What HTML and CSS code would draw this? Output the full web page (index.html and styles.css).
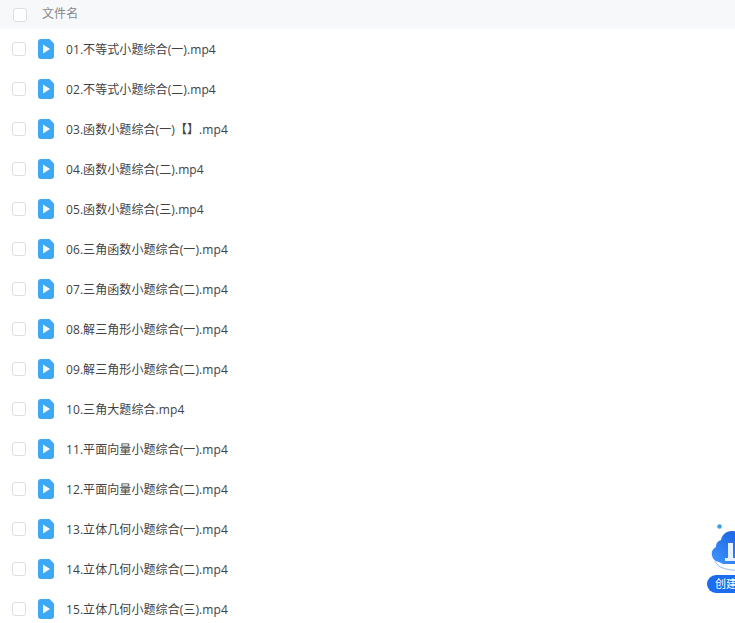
FILE: index.html
```html
<!DOCTYPE html>
<html lang="zh">
<head>
    <meta charset="utf-8" />
    <title>文件列表</title>
    <link rel="stylesheet" href="styles.css">
</head>
<body>
    <div class="head">
        <span class="check check-head"></span>
        <span class="head-name">文件名</span>
    </div>
    <div class="list">
        <div class="row"><span class="check"></span><svg class="ficon" viewBox="0 0 16 20"><path d="M3 0H11.5L16 4.5V17a3 3 0 0 1-3 3H3a3 3 0 0 1-3-3V3a3 3 0 0 1 3-3Z" fill="#3da8f5"/><path d="M5 5.5L12 10L5 14.5Z" fill="#fff"/></svg><span class="name">01.不等式小题综合(一).mp4</span></div>
        <div class="row"><span class="check"></span><svg class="ficon" viewBox="0 0 16 20"><path d="M3 0H11.5L16 4.5V17a3 3 0 0 1-3 3H3a3 3 0 0 1-3-3V3a3 3 0 0 1 3-3Z" fill="#3da8f5"/><path d="M5 5.5L12 10L5 14.5Z" fill="#fff"/></svg><span class="name">02.不等式小题综合(二).mp4</span></div>
        <div class="row"><span class="check"></span><svg class="ficon" viewBox="0 0 16 20"><path d="M3 0H11.5L16 4.5V17a3 3 0 0 1-3 3H3a3 3 0 0 1-3-3V3a3 3 0 0 1 3-3Z" fill="#3da8f5"/><path d="M5 5.5L12 10L5 14.5Z" fill="#fff"/></svg><span class="name">03.函数小题综合(一)【】.mp4</span></div>
        <div class="row"><span class="check"></span><svg class="ficon" viewBox="0 0 16 20"><path d="M3 0H11.5L16 4.5V17a3 3 0 0 1-3 3H3a3 3 0 0 1-3-3V3a3 3 0 0 1 3-3Z" fill="#3da8f5"/><path d="M5 5.5L12 10L5 14.5Z" fill="#fff"/></svg><span class="name">04.函数小题综合(二).mp4</span></div>
        <div class="row"><span class="check"></span><svg class="ficon" viewBox="0 0 16 20"><path d="M3 0H11.5L16 4.5V17a3 3 0 0 1-3 3H3a3 3 0 0 1-3-3V3a3 3 0 0 1 3-3Z" fill="#3da8f5"/><path d="M5 5.5L12 10L5 14.5Z" fill="#fff"/></svg><span class="name">05.函数小题综合(三).mp4</span></div>
        <div class="row"><span class="check"></span><svg class="ficon" viewBox="0 0 16 20"><path d="M3 0H11.5L16 4.5V17a3 3 0 0 1-3 3H3a3 3 0 0 1-3-3V3a3 3 0 0 1 3-3Z" fill="#3da8f5"/><path d="M5 5.5L12 10L5 14.5Z" fill="#fff"/></svg><span class="name">06.三角函数小题综合(一).mp4</span></div>
        <div class="row"><span class="check"></span><svg class="ficon" viewBox="0 0 16 20"><path d="M3 0H11.5L16 4.5V17a3 3 0 0 1-3 3H3a3 3 0 0 1-3-3V3a3 3 0 0 1 3-3Z" fill="#3da8f5"/><path d="M5 5.5L12 10L5 14.5Z" fill="#fff"/></svg><span class="name">07.三角函数小题综合(二).mp4</span></div>
        <div class="row"><span class="check"></span><svg class="ficon" viewBox="0 0 16 20"><path d="M3 0H11.5L16 4.5V17a3 3 0 0 1-3 3H3a3 3 0 0 1-3-3V3a3 3 0 0 1 3-3Z" fill="#3da8f5"/><path d="M5 5.5L12 10L5 14.5Z" fill="#fff"/></svg><span class="name">08.解三角形小题综合(一).mp4</span></div>
        <div class="row"><span class="check"></span><svg class="ficon" viewBox="0 0 16 20"><path d="M3 0H11.5L16 4.5V17a3 3 0 0 1-3 3H3a3 3 0 0 1-3-3V3a3 3 0 0 1 3-3Z" fill="#3da8f5"/><path d="M5 5.5L12 10L5 14.5Z" fill="#fff"/></svg><span class="name">09.解三角形小题综合(二).mp4</span></div>
        <div class="row"><span class="check"></span><svg class="ficon" viewBox="0 0 16 20"><path d="M3 0H11.5L16 4.5V17a3 3 0 0 1-3 3H3a3 3 0 0 1-3-3V3a3 3 0 0 1 3-3Z" fill="#3da8f5"/><path d="M5 5.5L12 10L5 14.5Z" fill="#fff"/></svg><span class="name">10.三角大题综合.mp4</span></div>
        <div class="row"><span class="check"></span><svg class="ficon" viewBox="0 0 16 20"><path d="M3 0H11.5L16 4.5V17a3 3 0 0 1-3 3H3a3 3 0 0 1-3-3V3a3 3 0 0 1 3-3Z" fill="#3da8f5"/><path d="M5 5.5L12 10L5 14.5Z" fill="#fff"/></svg><span class="name">11.平面向量小题综合(一).mp4</span></div>
        <div class="row"><span class="check"></span><svg class="ficon" viewBox="0 0 16 20"><path d="M3 0H11.5L16 4.5V17a3 3 0 0 1-3 3H3a3 3 0 0 1-3-3V3a3 3 0 0 1 3-3Z" fill="#3da8f5"/><path d="M5 5.5L12 10L5 14.5Z" fill="#fff"/></svg><span class="name">12.平面向量小题综合(二).mp4</span></div>
        <div class="row"><span class="check"></span><svg class="ficon" viewBox="0 0 16 20"><path d="M3 0H11.5L16 4.5V17a3 3 0 0 1-3 3H3a3 3 0 0 1-3-3V3a3 3 0 0 1 3-3Z" fill="#3da8f5"/><path d="M5 5.5L12 10L5 14.5Z" fill="#fff"/></svg><span class="name">13.立体几何小题综合(一).mp4</span></div>
        <div class="row"><span class="check"></span><svg class="ficon" viewBox="0 0 16 20"><path d="M3 0H11.5L16 4.5V17a3 3 0 0 1-3 3H3a3 3 0 0 1-3-3V3a3 3 0 0 1 3-3Z" fill="#3da8f5"/><path d="M5 5.5L12 10L5 14.5Z" fill="#fff"/></svg><span class="name">14.立体几何小题综合(二).mp4</span></div>
        <div class="row"><span class="check"></span><svg class="ficon" viewBox="0 0 16 20"><path d="M3 0H11.5L16 4.5V17a3 3 0 0 1-3 3H3a3 3 0 0 1-3-3V3a3 3 0 0 1 3-3Z" fill="#3da8f5"/><path d="M5 5.5L12 10L5 14.5Z" fill="#fff"/></svg><span class="name">15.立体几何小题综合(三).mp4</span></div>
    </div>
    <div class="create">
        <svg class="create-art" viewBox="0 0 40 60">
            <defs>
                <linearGradient id="cloudFill" x1="0" y1="1" x2="1" y2="0">
                    <stop offset="0" stop-color="#3f97fb"/>
                    <stop offset="1" stop-color="#1458e0"/>
                </linearGradient>
            </defs>
            <circle cx="12.5" cy="4.5" r="2.3" fill="#3f9ee8"/>
            <path d="M12 40a8 8 0 0 1-3-15a7 7 0 0 1 5-7a11 11 0 0 1 20-4H42V42H16Z" fill="url(#cloudFill)"/>
            <path d="M8 39q2 7 16 9q8 1 18-1" fill="none" stroke="#8fbdf6" stroke-width="1"/>
            <rect x="21" y="21" width="5" height="15" fill="#e6f1ff"/>
            <rect x="18" y="36" width="16" height="3" fill="#e6f1ff"/>
        </svg>
        <span class="create-btn">创建</span>
    </div>
</body>
</html>
```

FILE: styles.css
```css
html{font-size:12px;}
body{margin:0;height:623px;overflow:hidden;background:#fff;color:#424242;font-family:"Open Sans","Noto Sans CJK SC",sans-serif;letter-spacing:.08px;}
.head{height:29px;background:#f7f8fa;display:flex;align-items:center;color:#888;font-size:12px;}
.check{width:12px;height:12px;border:1px solid #dcdfe6;border-radius:3px;background:#fff;flex:none;}
.check-head{margin-left:13px;margin-right:15px;}
.head-name{margin-bottom:3px;}
.row{height:40px;display:flex;align-items:center;}
.row .check{margin-left:12px;}
.ficon{width:16px;height:20px;margin-left:12px;flex:none;}
.name{margin-left:12px;white-space:nowrap;}
.create{position:absolute;left:707px;top:522px;width:28px;height:72px;overflow:hidden;}
.create-art{position:absolute;left:0;top:0;width:40px;height:60px;}
.create-btn{position:absolute;left:0;top:53px;width:44px;height:18px;border-radius:9px;background:#1b6cf0;color:#fff;font-size:11px;line-height:18px;padding-left:8px;white-space:nowrap;}
```
